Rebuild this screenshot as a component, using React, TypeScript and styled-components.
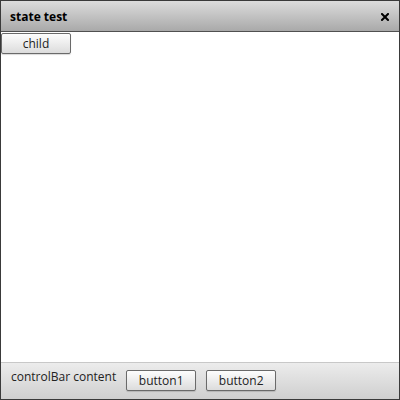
import React from "react";
import styled, { createGlobalStyle } from "styled-components";

const Global = createGlobalStyle`
  html, body { margin: 0; padding: 0; background: #fff; }
  body { font-family: "Open Sans", "Noto Sans", sans-serif; }
`;

const Panel = styled.div`
  box-sizing: border-box;
  width: 400px;
  height: 400px;
  border: 1px solid #3a3a3a;
  display: flex;
  flex-direction: column;
  background: #fff;
`;

const TitleBar = styled.div`
  box-sizing: border-box;
  height: 31px;
  flex: none;
  display: flex;
  align-items: center;
  justify-content: space-between;
  padding: 0 10px 0 9px;
  background: linear-gradient(#dcdcdc, #a9a9a9);
  border-bottom: 1px solid #505050;
`;

const Title = styled.span`
  font-size: 12px;
  font-weight: 700;
  color: #000;
`;

const CloseIcon = styled.svg`
  width: 8px;
  height: 8px;
  display: block;
  margin-top: 1px;
`;

const Content = styled.div`
  flex: 1;
  display: flex;
  align-items: flex-start;
  padding-top: 1px;
`;

const Button = styled.button`
  box-sizing: border-box;
  width: 70px;
  height: 21px;
  padding: 0;
  font-family: "Open Sans", "Noto Sans", sans-serif;
  font-size: 12px;
  color: #222;
  border: 1px solid #6a6a6a;
  border-radius: 2px;
  background: linear-gradient(#fdfdfd, #dcdcdc);
  box-shadow: 0 1px 1px rgba(0, 0, 0, 0.15);
`;

const ControlBar = styled.div`
  box-sizing: border-box;
  height: 37px;
  flex: none;
  display: flex;
  align-items: flex-start;
  gap: 10px;
  padding: 7px 0 0 10px;
  border-top: 1px solid #c8c8c8;
  background: linear-gradient(#ececec, #cfcfcf);
`;

const BarText = styled.span`
  font-size: 12px;
  color: #222;
  margin-top: -2px;
`;

export default function App() {
  return (
    <>
      <Global />
      <Panel>
        <TitleBar>
          <Title>state test</Title>
          <CloseIcon viewBox="0 0 8 8">
            <path d="M1 1 L7 7 M7 1 L1 7" stroke="#000" strokeWidth="2" strokeLinecap="square" />
          </CloseIcon>
        </TitleBar>
        <Content>
          <Button>child</Button>
        </Content>
        <ControlBar>
          <BarText>controlBar content</BarText>
          <Button>button1</Button>
          <Button>button2</Button>
        </ControlBar>
      </Panel>
    </>
  );
}
